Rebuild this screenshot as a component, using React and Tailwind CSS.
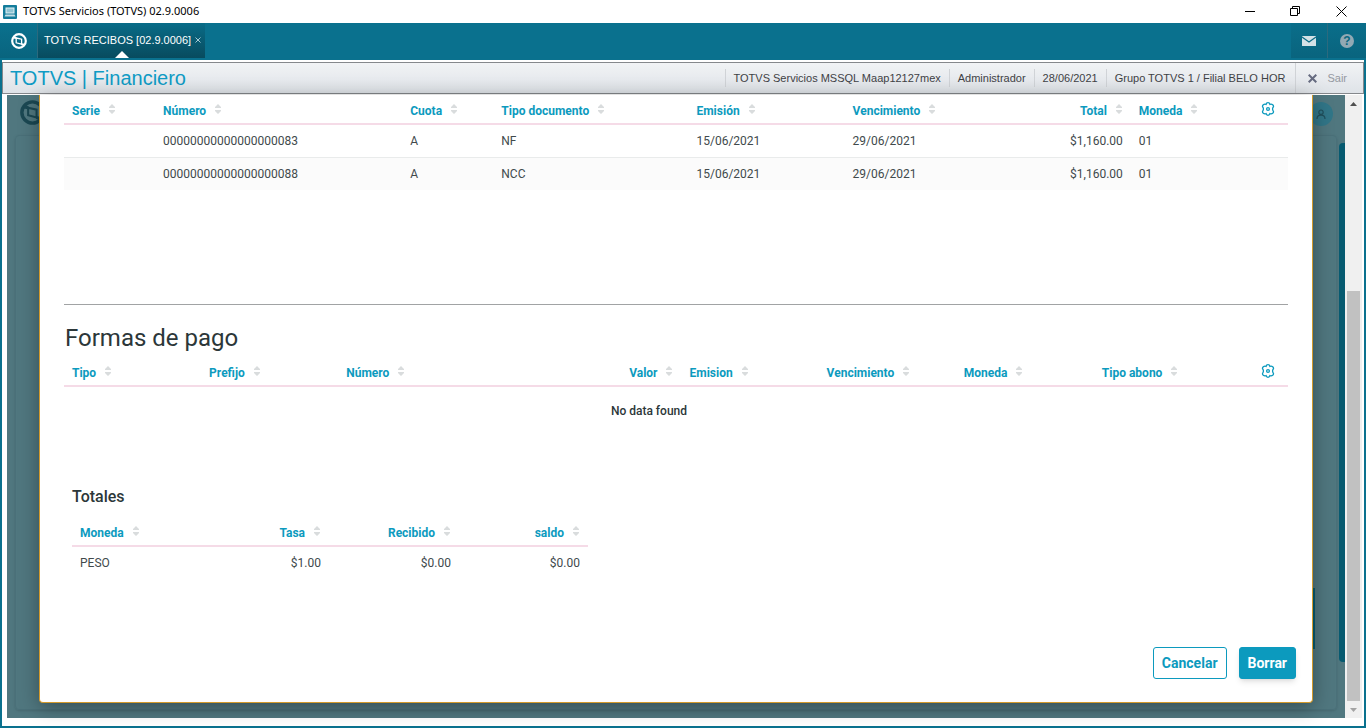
import React from 'react';

const documentColumns = [
    { label: 'Serie', key: 'serie', width: 'w-[91px]' },
    { label: 'Número', key: 'numero', width: 'w-[247px]' },
    { label: 'Cuota', key: 'cuota', width: 'w-[91px]' },
    { label: 'Tipo documento', key: 'tipo', width: 'w-[195px]' },
    { label: 'Emisión', key: 'emision', width: 'w-[156px]' },
    { label: 'Vencimiento', key: 'vencimiento', width: 'w-[156px]' },
    { label: 'Total', key: 'total', width: 'w-[130px]', right: true },
    { label: 'Moneda', key: 'moneda', width: 'w-[103px]' },
];

const documents = [
    { serie: '', numero: '00000000000000000083', cuota: 'A', tipo: 'NF', emision: '15/06/2021', vencimiento: '29/06/2021', total: '$1,160.00', moneda: '01' },
    { serie: '', numero: '00000000000000000088', cuota: 'A', tipo: 'NCC', emision: '15/06/2021', vencimiento: '29/06/2021', total: '$1,160.00', moneda: '01' },
];

const paymentColumns = [
    { label: 'Tipo', key: 'tipo', width: 'w-[137px]' },
    { label: 'Prefijo', key: 'prefijo', width: 'w-[137px]' },
    { label: 'Número', key: 'numero', width: 'w-[137px]' },
    { label: 'Valor', key: 'valor', width: 'w-[206px]', right: true },
    { label: 'Emision', key: 'emision', width: 'w-[137px]' },
    { label: 'Vencimiento', key: 'vencimiento', width: 'w-[137px]' },
    { label: 'Moneda', key: 'moneda', width: 'w-[138px]' },
    { label: 'Tipo abono', key: 'abono', width: 'w-[140px]' },
];

const totalColumns = [
    { label: 'Moneda', key: 'moneda', width: 'w-[128px]' },
    { label: 'Tasa', key: 'tasa', width: 'w-[129px]', right: true },
    { label: 'Recibido', key: 'recibido', width: 'w-[130px]', right: true },
    { label: 'saldo', key: 'saldo', width: 'w-[129px]', right: true },
];

const totals = [{ moneda: 'PESO', tasa: '$1.00', recibido: '$0.00', saldo: '$0.00' }];

const sessionInfo = ['TOTVS Servicios MSSQL Maap12127mex', 'Administrador', '28/06/2021', 'Grupo TOTVS 1 / Filial BELO HOR'];

function TotvsLogo({ className }) {
    return (
        <svg viewBox="0 0 16 16" className={className} fill="none" stroke="currentColor" aria-hidden="true">
            <circle cx="8" cy="8" r="6.8" strokeWidth="2.2" />
            <path d="M5.2 5 L10.6 6.2 V11.2 L5.2 9.8 Z" strokeWidth="1.3" />
            <path d="M2.4 4.4 L5.4 5 M10.4 11.2 L13.4 11.8" strokeWidth="2" />
        </svg>
    );
}

function SortIcon() {
    return (
        <svg viewBox="0 0 6 10" className="mb-1 h-2.5 w-1.5 shrink-0 text-[#d9dcdd]" aria-hidden="true">
            <path d="M3 0 L6 3 V4 H0 V3 Z M0 6 H6 V7 L3 10 L0 7 Z" fill="currentColor" />
        </svg>
    );
}

function GearIcon() {
    return (
        <svg viewBox="0 0 14 14" className="mb-1 h-3.5 w-3.5" fill="none" stroke="currentColor" aria-hidden="true">
            <path d="M5.1 2.3 Q5.4 0.7 7 0.7 Q8.6 0.7 8.9 2.3 Q10.5 1.7 11.7 2.7 Q13.2 4.2 11.9 5.6 Q11.3 7 11.9 8.4 Q13.2 9.8 11.7 11.3 Q10.5 12.3 8.9 11.7 Q8.6 13.3 7 13.3 Q5.4 13.3 5.1 11.7 Q3.5 12.3 2.3 11.3 Q0.8 9.8 2.1 8.4 Q2.7 7 2.1 5.6 Q0.8 4.2 2.3 2.7 Q3.5 1.7 5.1 2.3 Z" strokeWidth="1.3" />
            <circle cx="7" cy="7" r="1.4" strokeWidth="1.3" />
        </svg>
    );
}

function DataTable({ label, columns, rows, settings }) {
    return (
        <table className="w-full table-fixed border-collapse text-xs text-[#414a4c]" aria-label={label}>
            <thead>
                <tr className="h-[29px] border-b-2 border-[#f5dbe7]">
                    {columns.map((col) => (
                        <th key={col.key} scope="col" className={`${col.width} px-2 pt-[3px] font-bold text-[#0c9abe]`}>
                            <button type="button" className={`flex w-full items-center gap-[9px] whitespace-nowrap ${col.right ? 'justify-end pr-px' : ''}`}>
                                {col.label}
                                <SortIcon />
                            </button>
                        </th>
                    ))}
                    {settings && (
                        <th scope="col" className="w-[54px] pt-[3px] pl-[27px] text-[#0c9abe]">
                            <button type="button" aria-label="Configurar columnas" className="block">
                                <GearIcon />
                            </button>
                        </th>
                    )}
                </tr>
            </thead>
            <tbody>
                {rows.map((row, i) => (
                    <tr key={i} className="h-[33px] border-b border-[#e9ebeb] last:border-0 even:bg-[#fbfbfb]">
                        {columns.map((col) => (
                            <td key={col.key} className={`px-2 ${col.right ? 'text-right' : ''}`}>{row[col.key]}</td>
                        ))}
                        {settings && <td />}
                    </tr>
                ))}
                {rows.length === 0 && (
                    <tr className="h-12">
                        <td colSpan={columns.length} className="text-center font-medium text-[#2c3739]">No data found</td>
                        {settings && <td />}
                    </tr>
                )}
            </tbody>
        </table>
    );
}

function TitleBar() {
    return (
        <div className="flex h-[23px] items-center bg-white pl-[3px] text-black">
            <svg viewBox="0 0 14 14" className="h-3.5 w-3.5" aria-hidden="true">
                <rect width="14" height="14" rx="1" fill="#137c9b" />
                <rect x="3" y="3" width="8" height="5" fill="#8fc4d3" stroke="#e5f2f5" />
                <path d="M2.5 9.5 H11.5 L12.5 11.5 H1.5 Z" fill="#c4dde4" />
            </svg>
            <span className="ml-1.5 font-['Noto_Sans',sans-serif] text-[11px]">TOTVS Servicios (TOTVS) 02.9.0006</span>
            <div className="ml-auto flex">
                <button type="button" aria-label="Minimizar" className="flex w-[45px] justify-center">
                    <svg viewBox="0 0 11 11" className="h-[11px] w-[11px]" stroke="currentColor" aria-hidden="true"><path d="M0 5.5 H10" /></svg>
                </button>
                <button type="button" aria-label="Restaurar" className="flex w-[45px] justify-center">
                    <svg viewBox="0 0 11 11" className="h-[11px] w-[11px]" fill="none" stroke="currentColor" aria-hidden="true"><path d="M0.5 2.5 H7.5 V9.5 H0.5 Z M2.5 2.5 V0.5 H9.5 V7.5 H7.5" /></svg>
                </button>
                <button type="button" aria-label="Cerrar" className="flex w-12 justify-center pr-0.5">
                    <svg viewBox="0 0 11 11" className="h-[11px] w-[11px]" stroke="currentColor" aria-hidden="true"><path d="M0.5 0.5 L10.5 10.5 M10.5 0.5 L0.5 10.5" /></svg>
                </button>
            </div>
        </div>
    );
}

function TabBar() {
    return (
        <nav className="flex h-[37px] items-start text-white">
            <button type="button" aria-label="Inicio" className="flex h-[35px] w-[38px] items-center justify-center border-r border-[#2c6a7e] bg-linear-to-b from-[#0a718e] to-[#09647e]">
                <TotvsLogo className="h-4 w-4" />
            </button>
            <div className="relative flex h-[35px] items-center gap-1 bg-linear-to-b from-[#096c88] to-[#084b5e] pr-1 pl-1.5 text-[11px]">
                <a href="#recibos" className="whitespace-nowrap">TOTVS RECIBOS [02.9.0006]</a>
                <button type="button" aria-label="Cerrar pestaña" className="pb-0.5 text-[#a7cbd6]">
                    <svg viewBox="0 0 6 6" className="h-1.5 w-1.5" stroke="currentColor" aria-hidden="true"><path d="M0.5 0.5 L5.5 5.5 M5.5 0.5 L0.5 5.5" /></svg>
                </button>
                <svg viewBox="0 0 14 7" className="absolute bottom-0 left-1/2 h-[7px] w-3.5 -translate-x-1/2" aria-hidden="true"><path d="M7 0 L14 7 H0 Z" fill="#fff" /></svg>
            </div>
            <div className="ml-auto flex">
                <button type="button" aria-label="Mensajes" className="flex h-[35px] w-[37px] items-center justify-center border-r border-[#2c6a7e] bg-linear-to-b from-[#0a6e8a] to-[#09647e]">
                    <svg viewBox="0 0 14 10" className="h-2.5 w-3.5" aria-hidden="true">
                        <rect width="14" height="10" rx="0.5" fill="#d4e1e6" />
                        <path d="M0 1 L7 6 L14 1" fill="none" stroke="#0a6b86" strokeWidth="1.2" />
                    </svg>
                </button>
                <button type="button" aria-label="Ayuda" className="flex h-[35px] w-[38px] items-center justify-center bg-linear-to-b from-[#0a6e8a] to-[#09647e]">
                    <span className="flex h-3.5 w-3.5 items-center justify-center rounded-full bg-[#92a9b4] text-xs leading-none font-bold text-[#0a6780]">?</span>
                </button>
            </div>
        </nav>
    );
}

function ProductBar() {
    return (
        <header className="mt-0.5 flex h-8 items-center border border-[#85888c] bg-linear-to-b from-[#f1f3f5] to-[#dfe3e8] pl-[7px] text-[11px] text-[#3f4245]">
            <h1 className="text-xl text-[#0f9bc4]">TOTVS | Financiero</h1>
            <div className="ml-auto flex items-center">
                {sessionInfo.map((item) => (
                    <span key={item} className="border-l border-[#d0d3d7] px-2 leading-[18px] whitespace-nowrap">{item}</span>
                ))}
            </div>
            <button type="button" className="ml-0.5 flex h-full items-center gap-2.5 border-l border-[#d0d3d7] pr-4 pl-3 text-[#9599a1]">
                <svg viewBox="0 0 9 9" className="h-[9px] w-[9px]" stroke="#666b80" strokeWidth="2" aria-hidden="true"><path d="M0.7 0.7 L8.3 8.3 M8.3 0.7 L0.7 8.3" /></svg>
                Sair
            </button>
        </header>
    );
}

function Scrollbar() {
    return (
        <div className="flex w-[17px] flex-col bg-[#f0f0f0] px-0.5" aria-hidden="true">
            <svg viewBox="0 0 13 17" className="h-[17px] w-[13px]"><path d="M3 11 L6.5 7 L10 11 Z" fill="#505050" /></svg>
            <div className="flex-[179]" />
            <div className="flex-[410] bg-[#c1c1c1]" />
            <svg viewBox="0 0 13 17" className="h-[17px] w-[13px]"><path d="M3 7 H10 L6.5 11 Z" fill="#a3a3a3" /></svg>
        </div>
    );
}

/* Page that stays dimmed under the dialog */
function Backdrop() {
    return (
        <div className="absolute inset-0 overflow-hidden" aria-hidden="true">
            <TotvsLogo className="absolute top-[5px] left-[13px] h-[25px] w-[25px] text-[#1b4853]" />
            <div className="absolute inset-x-2 top-10 bottom-2 rounded border border-[#4a7079] shadow-sm" />
            <span className="absolute top-[7px] right-3 flex h-6 w-6 items-center justify-center rounded-full bg-[#317688] text-[#20505d]">
                <svg viewBox="0 0 10 10" className="h-2.5 w-2.5" fill="none" stroke="currentColor" strokeWidth="1.2"><circle cx="5" cy="3.2" r="2.2" /><path d="M1 10 Q1 6.2 5 6.2 Q9 6.2 9 10" /></svg>
            </span>
            <div className="absolute top-12 right-0 bottom-14 w-1.5 rounded-l bg-[#065a70]" />
            <div className="absolute right-[30px] bottom-[69px] h-[61px] w-4 bg-[#065a70]" />
        </div>
    );
}

function PaymentDialog() {
    return (
        <section role="dialog" aria-label="Borrar recibo" className="relative mx-8 mb-[15px] flex flex-1 flex-col rounded-b-sm border border-t-0 border-[#d39a2c] bg-white px-6 pb-[23px] font-[Roboto,sans-serif] shadow-[0_4px_20px_rgba(0,0,0,0.35)]">
            <div className="min-h-[209px]">
                <DataTable label="Documentos" columns={documentColumns} rows={documents} settings />
            </div>
            <hr className="border-[#a1a3a4]" />
            <h2 className="mt-[17px] pl-px text-2xl text-[#2c3739]">Formas de pago</h2>
            <div className="mt-[3px]">
                <DataTable label="Formas de pago" columns={paymentColumns} rows={[]} settings />
            </div>
            <div className="mt-[51px] px-2">
                <h3 className="text-base font-medium text-[#2c3739]">Totales</h3>
                <div className="mt-2 w-[516px] max-w-full">
                    <DataTable label="Totales" columns={totalColumns} rows={totals} />
                </div>
            </div>
            <div className="-mr-2 mt-auto flex justify-end gap-3 text-sm font-bold">
                <button type="button" className="h-8 rounded-[3px] border border-[#0c9abe] px-2 text-[#0c9abe]">Cancelar</button>
                <button type="button" className="h-8 rounded-[3px] border border-[#0c9abe] bg-[#0c9abe] px-2 text-white shadow-md">Borrar</button>
            </div>
        </section>
    );
}

function App() {
    return (
        <div className="flex min-h-screen flex-col bg-[#0a718e] font-['Liberation_Sans',Arial,sans-serif]">
            <TitleBar />
            <TabBar />
            <div className="mx-0.5 mb-0.5 flex flex-1 flex-col bg-white">
                <ProductBar />
                <main className="mt-px mr-0.5 mb-2 ml-[5px] flex flex-1">
                    <div className="relative flex flex-1 flex-col bg-[#50777f]">
                        <Backdrop />
                        <PaymentDialog />
                    </div>
                    <Scrollbar />
                </main>
            </div>
        </div>
    );
}

export default App;
